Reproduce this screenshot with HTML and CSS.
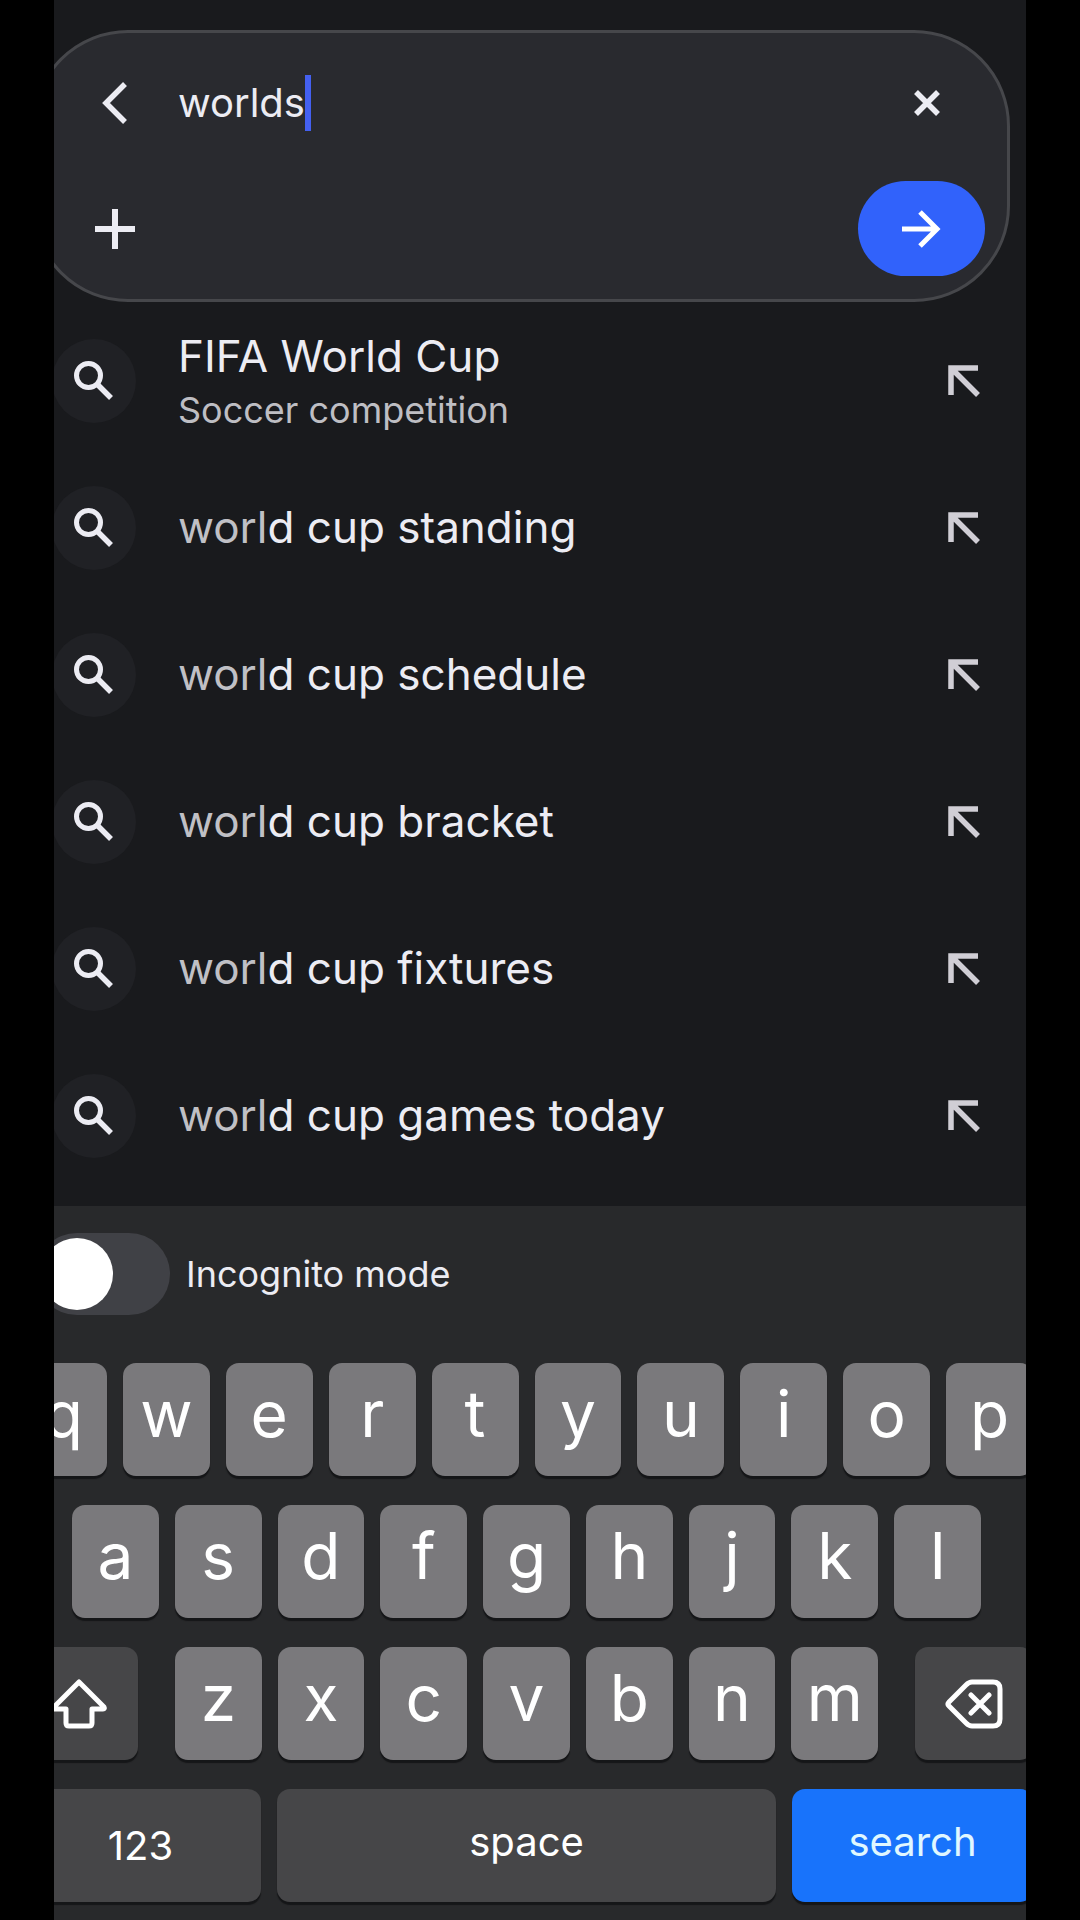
FILE: index.html
```html
<!DOCTYPE html>
<html lang="en">
<head>
  <meta charset="UTF-8">
  <meta name="viewport" content="width=device-width, initial-scale=1">
  <title>Search</title>
  <link rel="stylesheet" href="styles.css">
</head>
<body>
  <!-- shared icons -->
  <svg class="sprite" aria-hidden="true">
    <symbol id="icon-search" viewBox="0 0 84 84">
      <circle cx="36.5" cy="36.5" r="12" fill="none" stroke="currentColor" stroke-width="5"/>
      <path d="M44.5 44.5 59 59" fill="none" stroke="currentColor" stroke-width="5.5"/>
    </symbol>
    <symbol id="icon-fill" viewBox="0 0 36 36">
      <path d="M5 32V5h27M5 5l27 27" fill="none" stroke="currentColor" stroke-width="5.5"/>
    </symbol>
  </svg>

  <main class="screen">
    <form class="search-box" onsubmit="return false">
      <div class="search-line">
        <button type="button" class="icon-btn" aria-label="Back">
          <svg viewBox="0 0 48 48"><path d="M34 5 15 24l19 19" fill="none" stroke="currentColor" stroke-width="5.5"/></svg>
        </button>
        <div class="query">
          <input type="text" class="query-input" value="worlds" aria-label="Search">
          <span class="cursor"></span>
        </div>
        <button type="button" class="icon-btn clear" aria-label="Clear">
          <svg viewBox="0 0 48 48"><path d="m13 13 22 22M35 13 13 35" fill="none" stroke="currentColor" stroke-width="5.5"/></svg>
        </button>
      </div>
      <div class="action-line">
        <button type="button" class="icon-btn" aria-label="Add">
          <svg viewBox="0 0 48 48"><path d="M24 4v40M4 24h40" fill="none" stroke="currentColor" stroke-width="6"/></svg>
        </button>
        <button type="submit" class="go" aria-label="Go">
          <svg viewBox="0 0 48 48"><path d="M4 24h35M22 7l17 17-17 17" fill="none" stroke="currentColor" stroke-width="5"/></svg>
        </button>
      </div>
    </form>

    <ul class="suggestions">
      <li class="suggestion">
        <span class="badge"><svg><use href="#icon-search"/></svg></span>
        <div class="text">
          <div class="title">FIFA World Cup</div>
          <div class="subtitle">Soccer competition</div>
        </div>
        <button class="fill" aria-label="Use FIFA World Cup"><svg><use href="#icon-fill"/></svg></button>
      </li>
      <li class="suggestion">
        <span class="badge"><svg><use href="#icon-search"/></svg></span>
        <div class="text title"><span class="typed">worl</span>d cup standing</div>
        <button class="fill" aria-label="Use world cup standing"><svg><use href="#icon-fill"/></svg></button>
      </li>
      <li class="suggestion">
        <span class="badge"><svg><use href="#icon-search"/></svg></span>
        <div class="text title"><span class="typed">worl</span>d cup schedule</div>
        <button class="fill" aria-label="Use world cup schedule"><svg><use href="#icon-fill"/></svg></button>
      </li>
      <li class="suggestion">
        <span class="badge"><svg><use href="#icon-search"/></svg></span>
        <div class="text title"><span class="typed">worl</span>d cup bracket</div>
        <button class="fill" aria-label="Use world cup bracket"><svg><use href="#icon-fill"/></svg></button>
      </li>
      <li class="suggestion">
        <span class="badge"><svg><use href="#icon-search"/></svg></span>
        <div class="text title"><span class="typed">worl</span>d cup fixtures</div>
        <button class="fill" aria-label="Use world cup fixtures"><svg><use href="#icon-fill"/></svg></button>
      </li>
      <li class="suggestion">
        <span class="badge"><svg><use href="#icon-search"/></svg></span>
        <div class="text title"><span class="typed">worl</span>d cup games today</div>
        <button class="fill" aria-label="Use world cup games today"><svg><use href="#icon-fill"/></svg></button>
      </li>
    </ul>

    <section class="panel">
      <div class="incognito">
        <input type="checkbox" id="incognito" class="toggle">
        <label for="incognito">Incognito mode</label>
      </div>

      <div class="keyboard">
        <div class="keys">
          <button class="key">q</button>
          <button class="key">w</button>
          <button class="key">e</button>
          <button class="key">r</button>
          <button class="key">t</button>
          <button class="key">y</button>
          <button class="key">u</button>
          <button class="key">i</button>
          <button class="key">o</button>
          <button class="key">p</button>
        </div>
        <div class="keys middle">
          <button class="key">a</button>
          <button class="key">s</button>
          <button class="key">d</button>
          <button class="key">f</button>
          <button class="key">g</button>
          <button class="key">h</button>
          <button class="key">j</button>
          <button class="key">k</button>
          <button class="key">l</button>
        </div>
        <div class="keys lower">
          <button class="key dark side" aria-label="Shift">
            <svg viewBox="0 0 58 50"><path d="M29 3 4 28q-1 2 1 2h11v14q0 3 3 3h20q3 0 3-3V30h11q2 0 1-2Z" fill="none" stroke="currentColor" stroke-width="5" stroke-linejoin="round"/></svg>
          </button>
          <div class="keys letters">
            <button class="key">z</button>
            <button class="key">x</button>
            <button class="key">c</button>
            <button class="key">v</button>
            <button class="key">b</button>
            <button class="key">n</button>
            <button class="key">m</button>
          </div>
          <button class="key dark side" aria-label="Delete">
            <svg viewBox="0 0 58 50"><path d="M4 23 21 6q3-3 6-3h21q7 0 7 7v30q0 7-7 7H27q-3 0-6-3L4 27q-2-2 0-4ZM26 16l18 18M44 16 26 34" fill="none" stroke="currentColor" stroke-width="5" stroke-linecap="round" stroke-linejoin="round"/></svg>
          </button>
        </div>
        <div class="keys">
          <button class="key dark wide numbers">123</button>
          <button class="key dark space">space</button>
          <button class="key wide enter">search</button>
        </div>
      </div>
    </section>
  </main>
</body>
</html>
```
FILE: styles.css
```css
* { box-sizing: border-box; }

body {
  margin: 0;
  padding: 0 5%;
  background: #000;
  color: #ececf3;
  font-family: Inter, "Liberation Sans", sans-serif;
}

button {
  padding: 0;
  border: 0;
  background: none;
  color: inherit;
  font: inherit;
}
svg { display: block; }
.sprite { display: none; }

.screen {
  display: flex;
  flex-direction: column;
  min-height: 100vh;
  padding-top: 30px;
  background: #191a1d;
  overflow: hidden;
}

/* search box, runs off the left edge */
.search-box {
  display: flex;
  flex-direction: column;
  gap: 30px;
  margin: 0 16px 0 -22px;
  padding: 22px 22px 23px 56px;
  border: 3px solid #46474b;
  border-radius: 96px;
  background: #292a2f;
}
.search-line, .action-line { display: flex; align-items: center; }
.search-line { height: 96px; gap: 39px; }
.action-line { justify-content: space-between; }
.icon-btn, .icon-btn svg { width: 48px; height: 48px; }
.clear { margin-right: 34px; }
.query { display: flex; flex: 1; align-items: center; min-width: 0; }
.query-input {
  field-sizing: content;
  padding: 0 0 2px;
  border: 0;
  outline: 0;
  background: none;
  color: inherit;
  font: 40px Inter, "Liberation Sans", sans-serif;
}
.cursor { width: 6px; height: 56px; background: #4460f0; }
.go {
  display: grid;
  place-items: center;
  width: 127px;
  height: 95px;
  border-radius: 48px;
  background: #3162fb;
  color: #fff;
}
.go svg { width: 48px; height: 48px; }

.suggestions { margin: 0 0 17px; padding: 5px 0 0; list-style: none; }
.suggestion {
  display: flex;
  align-items: center;
  gap: 42px;
  height: 147px;
  padding-right: 44px;
  margin-left: -2px;
}
.badge { width: 84px; height: 84px; border-radius: 50%; background: #202125; }
.badge svg { width: 84px; height: 84px; }
.text { flex: 1; }
.title { font-size: 44px; line-height: 58px; }
.text.title { padding-bottom: 2px; }
.typed { color: #c0c0c5; }
.subtitle { color: #bebec3; font-size: 36px; line-height: 50px; }
.fill { color: #d0ced5; }
.fill svg { width: 36px; height: 36px; }

.panel { flex: 1; padding: 27px 0 19px; background: #28292b; }
.incognito {
  display: flex;
  align-items: center;
  gap: 16px;
  margin-left: -18px;
  font-size: 36px;
}
.toggle {
  display: flex;
  appearance: none;
  width: 134px;
  height: 82px;
  margin: 0;
  padding: 5px;
  border-radius: 41px;
  background: #404146;
}
.toggle::before {
  content: "";
  width: 72px;
  height: 72px;
  border-radius: 50%;
  background: #fff;
}
.toggle:checked { justify-content: flex-end; }

.keyboard {
  display: flex;
  flex-direction: column;
  gap: 29px;
  margin: 48px -7px 0 -34px;
}
.keys { display: flex; gap: 16px; }
.middle { padding: 0 52px; }
.lower { gap: 37px; }
.letters { flex: 1; }
.key {
  flex: 1 1 0;
  min-width: 0;
  height: 113px;
  padding-bottom: 12px;
  border-radius: 13px;
  background: #7a797c;
  box-shadow: 0 3px 1px #151618;
  color: #fff;
  font-size: 64px;
}
.dark { background: #464648; }
.side { display: grid; flex: 0 0 118px; place-items: center; padding: 0; }
.side svg { width: 58px; height: 50px; }
.wide { flex: 0 0 241px; }
.space, .wide { padding-bottom: 8px; font-size: 40px; }
.numbers { padding-bottom: 0; }
.enter { background: #1873fb; color: #e0f8ff; }
```
